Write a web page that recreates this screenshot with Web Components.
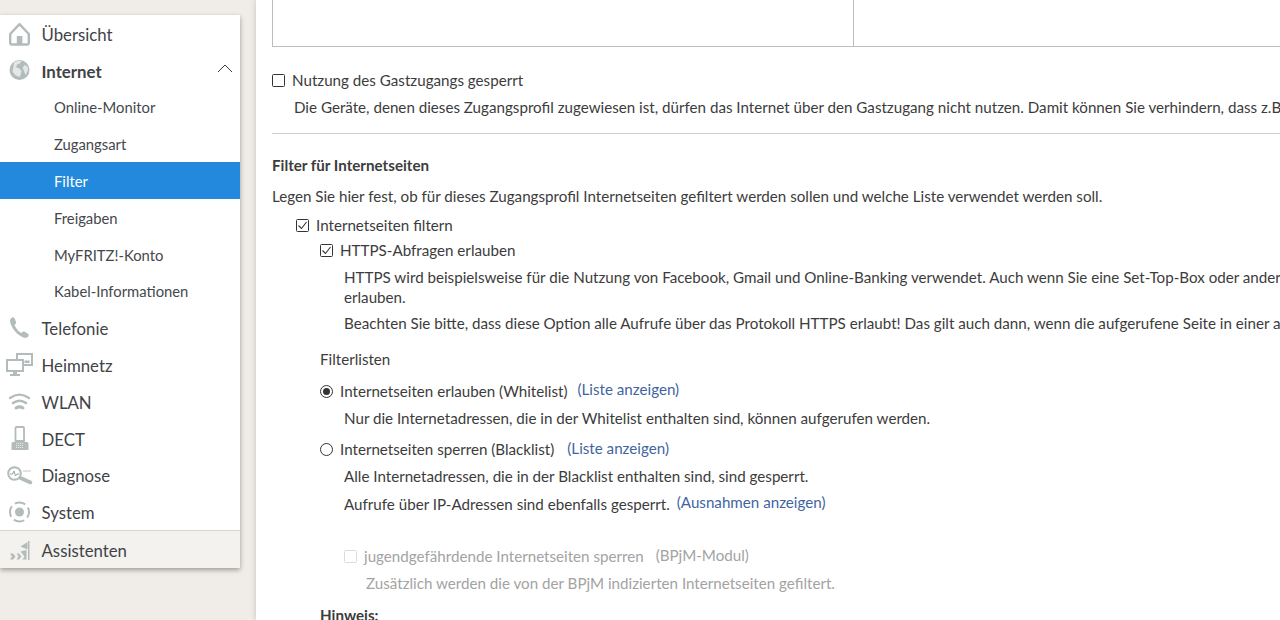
<!DOCTYPE html>
<html lang="de">
<head>
<meta charset="utf-8">
<title>FRITZ!Box</title>
<style>
  html, body { margin: 0; height: 100%; overflow: hidden; }
  body { background: #f0ede8; font-family: "Lato", "Noto Sans", sans-serif; color: #3c3c3c; }
</style>
</head>
<body>
<fb-page>
  <fb-nav slot="nav">
    <fb-nav-item icon="home">Übersicht</fb-nav-item>
    <fb-nav-item icon="globe" open>Internet</fb-nav-item>
    <fb-nav-item sub>Online-Monitor</fb-nav-item>
    <fb-nav-item sub>Zugangsart</fb-nav-item>
    <fb-nav-item sub active>Filter</fb-nav-item>
    <fb-nav-item sub>Freigaben</fb-nav-item>
    <fb-nav-item sub>MyFRITZ!-Konto</fb-nav-item>
    <fb-nav-item sub>Kabel-Informationen</fb-nav-item>
    <fb-nav-item icon="phone">Telefonie</fb-nav-item>
    <fb-nav-item icon="net">Heimnetz</fb-nav-item>
    <fb-nav-item icon="wifi">WLAN</fb-nav-item>
    <fb-nav-item icon="dect">DECT</fb-nav-item>
    <fb-nav-item icon="diag">Diagnose</fb-nav-item>
    <fb-nav-item icon="system">System</fb-nav-item>
    <fb-nav-item icon="wizard" foot>Assistenten</fb-nav-item>
  </fb-nav>

  <fb-table></fb-table>

  <fb-line style="--mt:23px"><fb-box></fb-box><span>Nutzung des Gastzugangs gesperrt</span></fb-line>
  <fb-line style="--mt:7px;--in:22px">Die Geräte, denen dieses Zugangsprofil zugewiesen ist, dürfen das Internet über den Gastzugang nicht nutzen. Damit können Sie verhindern, dass z.B.</fb-line>
  <fb-rule style="--mt:16px"></fb-rule>
  <fb-line style="--mt:21px" bold>Filter für Internetseiten</fb-line>
  <fb-line style="--mt:11px">Legen Sie hier fest, ob für dieses Zugangsprofil Internetseiten gefiltert werden sollen und welche Liste verwendet werden soll.</fb-line>
  <fb-line style="--mt:9px;--in:24px"><fb-box checked></fb-box><span>Internetseiten filtern</span></fb-line>
  <fb-line style="--mt:5px;--in:48px"><fb-box checked></fb-box><span>HTTPS-Abfragen erlauben</span></fb-line>
  <fb-line style="--mt:7px;--in:72px">HTTPS wird beispielsweise für die Nutzung von Facebook, Gmail und Online-Banking verwendet. Auch wenn Sie eine Set-Top-Box oder andere</fb-line>
  <fb-line style="--mt:0px;--in:72px">erlauben.</fb-line>
  <fb-line style="--mt:6px;--in:72px">Beachten Sie bitte, dass diese Option alle Aufrufe über das Protokoll HTTPS erlaubt! Das gilt auch dann, wenn die aufgerufene Seite in einer an</fb-line>
  <fb-line style="--mt:16px;--in:48px">Filterlisten</fb-line>
  <fb-line style="--mt:12px;--in:48px"><fb-box radio checked></fb-box><span>Internetseiten erlauben (Whitelist)</span><fb-link>(Liste anzeigen)</fb-link></fb-line>
  <fb-line style="--mt:7px;--in:72px">Nur die Internetadressen, die in der Whitelist enthalten sind, können aufgerufen werden.</fb-line>
  <fb-line style="--mt:11px;--in:48px"><fb-box radio></fb-box><span>Internetseiten sperren (Blacklist)</span><fb-link style="--ml:13px;--mb:2px">(Liste anzeigen)</fb-link></fb-line>
  <fb-line style="--mt:7px;--in:72px">Alle Internetadressen, die in der Blacklist enthalten sind, sind gesperrt.</fb-line>
  <fb-line style="--mt:8px;--in:72px"><span>Aufrufe über IP-Adressen sind ebenfalls gesperrt.</span><fb-link style="--ml:7px">(Ausnahmen anzeigen)</fb-link></fb-line>
  <fb-line style="--mt:32px;--in:72px" muted><fb-box disabled></fb-box><span>jugendgefährdende Internetseiten sperren</span><fb-link muted style="--ml:12px;--mb:2px">(BPjM-Modul)</fb-link></fb-line>
  <fb-line style="--mt:7px;--in:94px" muted>Zusätzlich werden die von der BPjM indizierten Internetseiten gefiltert.</fb-line>
  <fb-line style="--mt:12px;--in:48px" bold>Hinweis:</fb-line>
</fb-page>

<script>
// shared helper for the small elements below
function shadow(el, html) {
  el.attachShadow({ mode: 'open' }).innerHTML = html;
}

const GREY = '#b4bbbb';

const ICONS = {
  home: `<path d="M10.200 19 19.500 9.200 28.800 19V28a1.500 1.500 0 0 1-1.500 1.500H11.700A1.500 1.500 0 0 1 10.200 28Z" fill="none" stroke="${GREY}" stroke-width="2.400" stroke-linejoin="round"/><rect x="16.800" y="21" width="5.600" height="8.500" fill="${GREY}"/>`,
  globe: `<circle cx="19.500" cy="18" r="10" fill="${GREY}"/><path d="M14 10.500c2.500-1.500 5-2 7.500-1.500l-1.500 2.500-3 1-.8 3 3.300 1 2 2.500-1.500 6c-3.500-.5-6-2.500-7.500-5.500.3-3 1.500-6 1.500-9ZM24.500 13l3 1.500.5 4-2.500 4.500-1.500-4-1.500-3Z" fill="#e4e7e7"/>`,
  phone: `<path d="M11.500 9c-1.300 1-1.800 2.500-1.200 4.500 1.800 6.500 6.500 12 13 15 2 .7 4 .2 5-1 .8-1 .5-2-.5-2.700l-3-2c-1-.6-1.800-.5-2.500.3l-1 1c-3.300-1.800-5.500-4.800-6.800-8l1-1c.8-.8.8-1.500.4-2.500l-1.500-3.500c-.5-.9-1.600-1.200-2.400-.6Z" fill="${GREY}"/>`,
  net: `<g fill="none" stroke="${GREY}" stroke-width="2"><path d="M17 13V8h15v11h-8"/><rect x="7" y="14" width="16" height="11"/></g><path d="M13 25h4v3h3v2H10v-2h3Z" fill="${GREY}"/><rect x="24.500" y="14.500" width="5" height="2.500" fill="${GREY}"/>`,
  wifi: `<g fill="none" stroke="${GREY}" stroke-linecap="round"><path d="M10 15c6-4.300 13-4.300 19 0" stroke-width="2.200"/><path d="M13 20c4-2.800 9-2.800 13 0" stroke-width="2.600"/><path d="M16 25c2.300-1.500 4.700-1.500 7 0" stroke-width="3"/></g>`,
  dect: `<rect x="15.500" y="7" width="8.500" height="15" rx="1" fill="none" stroke="${GREY}" stroke-width="1.800"/><path d="M15 20h9.500v2h2.500a1.500 1.500 0 0 1 1.500 1.500V30h-17v-6.500A1.500 1.500 0 0 1 13 22h2Z" fill="${GREY}"/><path d="M16 23.500h7M16 25.500h7M16 27.500h7" stroke="#e6e9e9" stroke-dasharray="1.200 .8"/>`,
  diag: `<circle cx="14.500" cy="17.500" r="6.300" fill="none" stroke="${GREY}" stroke-width="2"/><path d="M10 18h2.500l1.500-3 1.500 5 1.500-2h2" fill="none" stroke="#98a0a0" stroke-width="1"/><path d="M20.500 22 30.500 26.500" stroke="${GREY}" stroke-width="3.600" stroke-linecap="round"/><path d="M23 15h8" stroke="#ccd1d1" stroke-width="1.200"/>`,
  system: `<circle cx="19.500" cy="19" r="4.500" fill="${GREY}"/><circle cx="19.500" cy="19" r="9.500" fill="none" stroke="${GREY}" stroke-width="2" stroke-dasharray="11 3.900" stroke-dashoffset="5"/>`,
  wizard: `<path d="M28 10h1.500v19H28ZM27.500 11 20.500 15.500 27.500 18.500ZM10 22.500h3l2.500 3-2.500 3h-3l2-3ZM16.500 22.500h2.500l2.500 3-2.500 3h-2.500l2-3ZM20.500 20.500l6-1.500v9.500h-4l2-3Z" fill="${GREY}"/>`
};

class FbPage extends HTMLElement {
  constructor() {
    super();
    shadow(this, `
      <style>
        :host { display: flex; height: 620px; width: 1280px; overflow: hidden; }
        .side { flex: 0 0 256px; }
        .main {
          flex: 1; min-width: 0; background: #fff; padding-left: 16px;
          box-shadow: 0 0 6px rgba(0, 0, 0, .18); overflow: hidden;
        }
      </style>
      <div class="side"><slot name="nav"></slot></div>
      <div class="main"><slot></slot></div>`);
  }
}

class FbNav extends HTMLElement {
  constructor() {
    super();
    shadow(this, `
      <style>
        :host {
          display: flex; flex-direction: column; width: 240px; margin-top: 15px;
          background: #fff; box-shadow: 0 2px 5px rgba(0, 0, 0, .35);
        }
      </style>
      <slot></slot>`);
  }
}

class FbNavItem extends HTMLElement {
  constructor() {
    super();
    const icon = ICONS[this.getAttribute('icon')];
    const svg = icon ? `<svg viewBox="0 0 40 37" width="40" height="37">${icon}</svg>` : '';
    const chevron = this.hasAttribute('open')
      ? `<svg class="chev" viewBox="0 0 16 9" width="16" height="9"><path d="M1 8 8 1l7 7" fill="none" stroke="#3c3c3c" stroke-width="1"/></svg>`
      : '';
    shadow(this, `
      <style>
        :host {
          display: flex; align-items: center; height: 36.8px; position: relative;
          font-size: 16.8px; color: #3f4347;
        }
        :host([open]) { font-weight: 700; }
        :host([sub]) { font-size: 14.8px; padding-left: 54px; color: #44484c; }
        :host([active]) { background: #2389dc; color: #fff; }
        :host([foot]) {
          background: #f4f2ef; border-top: 1px solid #d9d6d0; height: 37.8px;
          box-sizing: border-box;
        }
        svg { flex: none; display: block; }
        .text { margin-left: 1.500px; margin-top: 2px; }
        :host([sub]) .text { margin-left: 0; margin-top: 1px; }
        .chev { margin-left: auto; margin-right: 7px; margin-top: -3px; }
      </style>
      ${svg}<span class="text"><slot></slot></span>${chevron}`);
  }
}

class FbTable extends HTMLElement {
  constructor() {
    super();
    shadow(this, `
      <style>
        :host {
          display: grid; grid-template-columns: 580px 1fr; height: 47px; box-sizing: border-box;
          margin-right: -40px; border: 1px solid #bdbdbd; border-top: 0;
        }
        div + div { border-left: 1px solid #bdbdbd; }
      </style>
      <div></div><div></div>`);
  }
}

class FbLine extends HTMLElement {
  constructor() {
    super();
    shadow(this, `
      <style>
        :host {
          display: flex; align-items: center; height: 20px; white-space: nowrap;
          margin-top: var(--mt, 0); padding-left: var(--in, 0);
          font-size: 15.17px; color: #3c3c3c;
        }
        :host([bold]) { font-weight: 700; }
        :host([muted]) { color: #a3a3a3; }
      </style>
      <slot></slot>`);
  }
}

class FbRule extends HTMLElement {
  constructor() {
    super();
    shadow(this, `<style>:host { display: block; height: 1px; background: #cfcfcf; margin-top: var(--mt, 0); }</style>`);
  }
}

class FbBox extends HTMLElement {
  constructor() {
    super();
    let mark = '';
    if (this.hasAttribute('radio')) {
      mark = this.hasAttribute('checked')
        ? `<circle cx="6.500" cy="6.500" r="6" fill="none" stroke="#333"/><circle cx="6.500" cy="6.500" r="3.500" fill="#333"/>`
        : `<circle cx="6.500" cy="6.500" r="6" fill="none" stroke="#333"/>`;
    } else {
      const stroke = this.hasAttribute('disabled') ? '#dcdcdc' : '#333';
      mark = `<rect x=".5" y=".5" width="12" height="12" rx="1" fill="none" stroke="${stroke}"/>`;
      if (this.hasAttribute('checked')) mark += `<path d="M2.500 6.500 5.500 9.500 10.500 3" fill="none" stroke="#333" stroke-width="1.100"/>`;
    }
    shadow(this, `
      <style>
        :host { display: block; flex: none; width: 13px; height: 13px; margin-right: 7px; }
        svg { display: block; }
      </style>
      <svg viewBox="0 0 13 13" width="13" height="13">${mark}</svg>`);
  }
}

class FbLink extends HTMLElement {
  constructor() {
    super();
    shadow(this, `
      <style>
        :host { display: block; margin-left: var(--ml, 10px); margin-bottom: var(--mb, 4px); color: #3f659f; }
        :host([muted]) { color: #a3a3a3; }
      </style>
      <slot></slot>`);
  }
}

customElements.define('fb-page', FbPage);
customElements.define('fb-nav', FbNav);
customElements.define('fb-nav-item', FbNavItem);
customElements.define('fb-table', FbTable);
customElements.define('fb-line', FbLine);
customElements.define('fb-rule', FbRule);
customElements.define('fb-box', FbBox);
customElements.define('fb-link', FbLink);
</script>
</body>
</html>
